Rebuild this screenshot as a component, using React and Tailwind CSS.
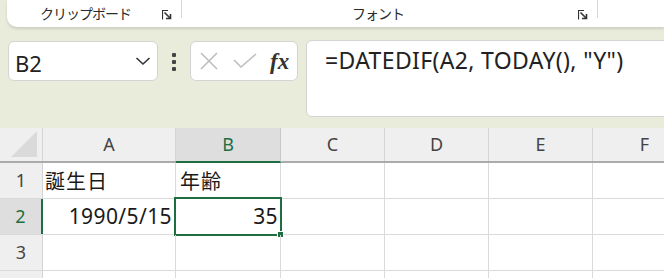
import React from "react";

const jp = { fontFamily: '"Noto Sans CJK JP", sans-serif' };
const latin = { fontFamily: '"Noto Sans", "Noto Sans CJK JP", sans-serif' };

function Launcher() {
  return (
    <svg width="10" height="10" viewBox="0 0 10 10" className="block">
      <path d="M0.5 9.5 V0.5 H6" fill="none" stroke="#333" strokeWidth="1.2" />
      <path d="M2.5 2.5 L8 8" stroke="#333" strokeWidth="1.6" />
      <path d="M4 8.5 H8.5 V4" fill="none" stroke="#333" strokeWidth="1.6" />
    </svg>
  );
}

const cols = [
  { l: "A", w: "w-[133px]" },
  { l: "B", w: "w-[105px]" },
  { l: "C", w: "w-[104px]" },
  { l: "D", w: "w-[104px]" },
  { l: "E", w: "w-[104px]" },
  { l: "F", w: "w-[104px]" },
];

export default function App() {
  return (
    <div className="w-[664px] h-[278px] bg-[#e9ebdb] overflow-hidden" style={latin}>
      {/* ribbon */}
      <div className="ml-[7px] h-[27px] bg-white rounded-bl-[10px] shadow-[0_2px_3px_rgba(0,0,0,0.12)] flex text-[#2b2b2b] text-[14px] tracking-[-1px]" style={jp}>
        <div className="w-[174px] shrink-0 flex items-center pl-[33px] pr-[9px] pb-[1px]">
          <span>クリップボード</span>
          <span className="ml-auto mt-[4px]"><Launcher /></span>
        </div>
        <div className="w-px h-[18px] bg-[#d6d6d6] shrink-0" />
        <div className="w-[415px] shrink-0 flex items-center pl-[170px] pr-[9px] pb-[1px]">
          <span>フォント</span>
          <span className="ml-auto mt-[4px]"><Launcher /></span>
        </div>
        <div className="w-px h-[18px] bg-[#d6d6d6] shrink-0" />
      </div>

      {/* formula bar */}
      <div className="flex mt-[13px] h-[77px] items-start">
        <div className="ml-[8px] shrink-0 mt-[1px] w-[150px] h-[40px] bg-white rounded-[6px] border border-[#d4d4d4] flex items-center pl-[6px] pr-[6px]">
          <span className="text-[22px] text-[#222] leading-none mt-[3px]">B2</span>
          <svg width="16" height="10" viewBox="0 0 16 10" className="ml-auto">
            <path d="M1.5 2 L8 8 L14.5 2" fill="none" stroke="#333" strokeWidth="1.6" />
          </svg>
        </div>
        <div className="w-[32px] shrink-0 h-[40px] flex flex-col items-center justify-center gap-[3.5px] mt-[2px]">
          <div className="w-[3.5px] h-[3.5px] bg-[#444] rounded-[1px]" />
          <div className="w-[3.5px] h-[3.5px] bg-[#444] rounded-[1px]" />
          <div className="w-[3.5px] h-[3.5px] bg-[#444] rounded-[1px]" />
        </div>
        <div className="w-[108px] shrink-0 mt-[1px] h-[40px] bg-white rounded-[6px] border border-[#d4d4d4] flex items-center pl-[9px]">
          <svg width="18" height="18" viewBox="0 0 18 18">
            <path d="M1 1 L17 17 M17 1 L1 17" stroke="#bdbdbd" strokeWidth="1.6" />
          </svg>
          <svg width="24" height="16" viewBox="0 0 24 16" className="ml-[15px]">
            <path d="M1 7 L8 14 L23 1" fill="none" stroke="#bdbdbd" strokeWidth="1.6" />
          </svg>
          <span className="ml-[13px] text-[23px] italic font-bold text-[#333] leading-none" style={{ fontFamily: '"Liberation Serif", serif' }}>fx</span>
        </div>
        <div className="ml-[8px] shrink-0 w-[400px] h-[77px] bg-white rounded-[6px] border border-[#d4d4d4] pl-[18px] pt-[2px]">
          <span className="text-[23px] tracking-[0.35px] text-[#222]">=DATEDIF(A2, TODAY(), "Y")</span>
        </div>
      </div>

      {/* grid */}
      <div className="mt-[11px] bg-white">
        {/* header row */}
        <div className="flex h-[35px] bg-[#efefef] border-b-[2px] border-[#ababab]">
          <div className="w-[43px] shrink-0 border-r border-[#d4d4d4] flex items-end justify-end pr-[5px] pb-[4px]">
            <svg width="26" height="26" viewBox="0 0 26 26">
              <path d="M26 0 L26 26 L0 26 Z" fill="#dadada" />
            </svg>
          </div>
          {cols.map((c) => (
            <div
              key={c.l}
              className={`${c.w} shrink-0 flex items-center justify-center text-[18px] ${
                c.l === "B"
                  ? "bg-[#dedede] text-[#1e6e42] border-b-[2px] border-[#1e6e42] -mb-[2px] border-r border-r-[#c8c8c8]"
                  : "text-[#444] border-r border-[#d4d4d4]"
              }`}
            >
              {c.l}
            </div>
          ))}
        </div>
        {[1, 2, 3, 4].map((r) => (
          <div key={r} className="flex h-[36px] border-b border-[#dadada]">
            <div
              className={`w-[43px] shrink-0 flex items-center justify-center text-[18px] ${
                r === 2
                  ? "bg-[#dedede] text-[#1e6e42] border-r-[2px] border-[#1e6e42]"
                  : "bg-[#efefef] text-[#444] border-r border-[#d4d4d4]"
              }`}
            >
              {r < 4 ? r : ""}
            </div>
            {cols.map((c, i) => {
              let content = null;
              let align = "justify-start pl-[2px]";
              let cls = "text-[21px] tracking-[0.4px]";
              if (r === 1 && i === 0) {
                content = "誕生日";
                cls = "text-[20px] tracking-[1px]";
              }
              if (r === 1 && i === 1) {
                content = "年齢";
                cls = "text-[20px] tracking-[1px] pl-[4px]";
              }
              if (r === 2 && i === 0) {
                content = "1990/5/15";
                align = "justify-end pr-[3px]";
              }
              const sel = r === 2 && i === 1;
              if (sel) {
                content = "35";
                align = "justify-end pr-[3px]";
              }
              return (
                <div
                  key={c.l}
                  className={`${c.w} shrink-0 flex items-center ${align} ${cls} text-[#1a1a1a] relative ${
                    sel ? "" : "border-r border-[#dadada]"
                  }`}
                >
                  {sel && (
                    <div className="absolute -left-[2px] -top-[2px] -right-[1px] -bottom-[2px] border-[2px] border-[#1e6e42] pointer-events-none">
                      <div className="absolute -right-[4px] -bottom-[4px] w-[7px] h-[7px] bg-[#1e6e42] border border-white" />
                    </div>
                  )}
                  <span className="relative" style={r === 1 ? jp : undefined}>{content}</span>
                </div>
              );
            })}
          </div>
        ))}
      </div>
    </div>
  );
}
